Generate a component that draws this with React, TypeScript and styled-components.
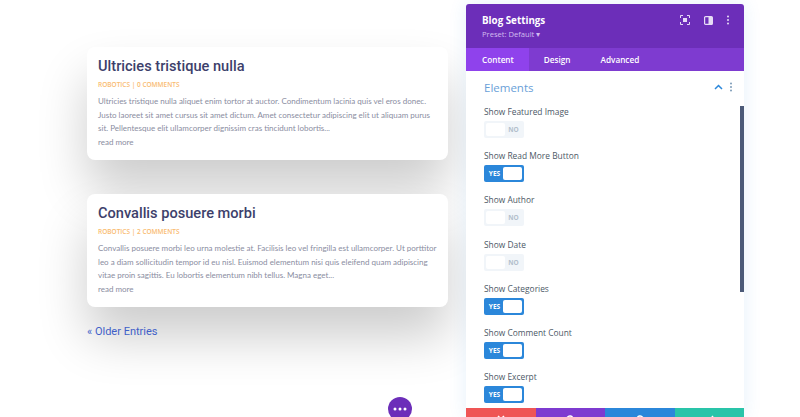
import styled, { createGlobalStyle } from "styled-components";

const GlobalStyle = createGlobalStyle`
  html, body {
    margin: 0;
    height: 417px;
    overflow: hidden;
    background: #fff;
    font-family: "Open Sans", sans-serif;
  }
`;

const posts = [
  {
    title: "Ultricies tristique nulla",
    meta: "ROBOTICS | 0 COMMENTS",
    lines: [
      "Ultricies tristique nulla aliquet enim tortor at auctor. Condimentum lacinia quis vel eros donec.",
      "Justo laoreet sit amet cursus sit amet dictum. Amet consectetur adipiscing elit ut aliquam purus",
      "sit. Pellentesque elit ullamcorper dignissim cras tincidunt lobortis...",
    ],
  },
  {
    title: "Convallis posuere morbi",
    meta: "ROBOTICS | 2 COMMENTS",
    lines: [
      "Convallis posuere morbi leo urna molestie at. Facilisis leo vel fringilla est ullamcorper. Ut porttitor",
      "leo a diam sollicitudin tempor id eu nisl. Euismod elementum nisi quis eleifend quam adipiscing",
      "vitae proin sagittis. Eu lobortis elementum nibh tellus. Magna eget...",
    ],
  },
];

const toggles = [
  { label: "Show Featured Image", on: false },
  { label: "Show Read More Button", on: true },
  { label: "Show Author", on: false },
  { label: "Show Date", on: false },
  { label: "Show Categories", on: true },
  { label: "Show Comment Count", on: true },
  { label: "Show Excerpt", on: true },
];

const Dots = ({ color }: { color: string }) => (
  <svg width="4" height="10" viewBox="0 0 4 10">
    <circle cx="2" cy="1.5" r="1" fill={color} />
    <circle cx="2" cy="5" r="1" fill={color} />
    <circle cx="2" cy="8.5" r="1" fill={color} />
  </svg>
);

const App = () => {
  return (
    <Page>
      <GlobalStyle />
      <Blog>
        {posts.map((post) => (
          <Card key={post.title}>
            <Title>{post.title}</Title>
            <Meta>{post.meta}</Meta>
            <Excerpt>
              {post.lines.map((line) => (
                <div key={line}>{line}</div>
              ))}
              <div>read more</div>
            </Excerpt>
          </Card>
        ))}
        <OlderLink>« Older Entries</OlderLink>
      </Blog>
      <Panel>
        <Header>
          <div>
            <PanelTitle>Blog Settings</PanelTitle>
            <Preset>Preset: Default ▾</Preset>
          </div>
          <HeaderIcons>
            <svg width="10" height="10" viewBox="0 0 10 10" fill="none" stroke="#e6dcf5" strokeWidth="1">
              <path d="M.5 3V.5H3M7 .5h2.5V3M9.5 7v2.5H7M3 9.5H.5V7" />
              <rect x="3" y="3" width="4" height="4" fill="#e6dcf5" stroke="none" />
            </svg>
            <svg width="9" height="9" viewBox="0 0 9 9">
              <rect x="0.6" y="0.6" width="7.8" height="7.8" rx="1" fill="none" stroke="#e6dcf5" strokeWidth="1.2" />
              <rect x="4.5" y="1" width="3.5" height="7" fill="#e6dcf5" />
            </svg>
            <Dots color="#e6dcf5" />
          </HeaderIcons>
        </Header>
        <Tabs>
          <Tab $active>Content</Tab>
          <Tab>Design</Tab>
          <Tab>Advanced</Tab>
        </Tabs>
        <Body>
          <SectionHead>
            <SectionTitle>Elements</SectionTitle>
            <SectionIcons>
              <svg width="9" height="6" viewBox="0 0 9 6" fill="none" stroke="#2b87da" strokeWidth="1.5">
                <path d="M1 5l3.5-3.5L8 5" />
              </svg>
              <Dots color="#7d9bb8" />
            </SectionIcons>
          </SectionHead>
          {toggles.map((item) => (
            <Field key={item.label}>
              <FieldLabel>{item.label}</FieldLabel>
              <Toggle $on={item.on}>
                {item.on ? (
                  <>
                    <ToggleText $on>YES</ToggleText>
                    <Knob />
                  </>
                ) : (
                  <>
                    <Knob />
                    <ToggleText>NO</ToggleText>
                  </>
                )}
              </Toggle>
            </Field>
          ))}
        </Body>
        <Scrollbar />
        <Footer>
          <FooterButton $color="#ef5555">
            <svg width="10" height="10" viewBox="0 0 10 10" stroke="#fff" strokeWidth="1.5">
              <path d="M2 2l6 6M8 2l-6 6" />
            </svg>
          </FooterButton>
          <FooterButton $color="#7e3bd0">
            <svg width="10" height="10" viewBox="0 0 10 10" fill="none" stroke="#fff" strokeWidth="1.4">
              <path d="M2 5a3 3 0 1 0 1-2.3L1.5 4" />
            </svg>
          </FooterButton>
          <FooterButton $color="#2b87da">
            <svg width="10" height="10" viewBox="0 0 10 10" fill="none" stroke="#fff" strokeWidth="1.4">
              <path d="M8 5a3 3 0 1 1-1-2.3L8.5 4" />
            </svg>
          </FooterButton>
          <FooterButton $color="#29c4a9">
            <svg width="10" height="10" viewBox="0 0 10 10" fill="none" stroke="#fff" strokeWidth="1.5">
              <path d="M1.5 5.5l2.5 2.5 5-6" />
            </svg>
          </FooterButton>
        </Footer>
      </Panel>
      <Fab>
        <svg width="14" height="4" viewBox="0 0 14 4" fill="#fff">
          <circle cx="2" cy="2" r="1.5" />
          <circle cx="7" cy="2" r="1.5" />
          <circle cx="12" cy="2" r="1.5" />
        </svg>
      </Fab>
    </Page>
  );
};

export default App;

const Page = styled.div`
  position: relative;
  display: flex;
  align-items: flex-start;
  height: 417px;
  overflow: hidden;
  padding-left: 87px;
`;

const Blog = styled.div`
  width: 361px;
  padding-top: 47px;
  display: flex;
  flex-direction: column;
`;

const Card = styled.div`
  box-sizing: border-box;
  height: 113px;
  margin-bottom: 34px;
  padding: 10px 11px;
  border-radius: 8px;
  background: #fff;
  box-shadow: 0 30px 50px rgba(0, 0, 0, 0.2);
`;

const Title = styled.div`
  font-family: Roboto, sans-serif;
  font-size: 14.6px;
  font-weight: 500;
  line-height: 18px;
  color: #3d3f6b;
`;

const Meta = styled.div`
  margin-top: 5px;
  font-size: 6.5px;
  font-weight: 600;
  line-height: 9px;
  color: #f9bb70;
`;

const Excerpt = styled.div`
  margin-top: 6px;
  font-family: Lato, sans-serif;
  font-size: 8px;
  line-height: 13.7px;
  white-space: nowrap;
  color: #8a8d9f;
`;

const OlderLink = styled.div`
  margin-top: -16px;
  font-family: Roboto, sans-serif;
  font-size: 11px;
  line-height: 14px;
  color: #3f5fc8;
`;

const Panel = styled.div`
  position: relative;
  flex: none;
  box-sizing: border-box;
  display: flex;
  flex-direction: column;
  width: 278px;
  height: 413px;
  margin: 4px 0 0 18px;
  overflow: hidden;
  background: #fff;
  border-radius: 3px 3px 0 0;
  box-shadow: 0 0 18px rgba(43, 135, 218, 0.12);
`;

const Header = styled.div`
  flex: none;
  box-sizing: border-box;
  height: 44px;
  padding: 10px 16px 0 16px;
  display: flex;
  justify-content: space-between;
  background: #6c2eb9;
`;

const PanelTitle = styled.div`
  font-size: 9.8px;
  font-weight: 700;
  line-height: 13px;
  color: #fff;
`;

const Preset = styled.div`
  margin-top: 2px;
  font-size: 7.6px;
  line-height: 11px;
  color: #d3bdf0;
`;

const HeaderIcons = styled.div`
  display: flex;
  align-items: center;
  gap: 13.5px;
  height: 10px;
  margin: 1px -2px 0 0;
`;

const Tabs = styled.div`
  flex: none;
  display: flex;
  height: 23px;
  background: #7e3bd0;
`;

const Tab = styled.div<{ $active?: boolean }>`
  padding: ${(p) => (p.$active ? "0 15px 0 16px" : "0 15px")};
  display: flex;
  align-items: center;
  font-size: 8.2px;
  font-weight: 600;
  color: #fff;
  background: ${(p) => (p.$active ? "#8f42ec" : "transparent")};
`;

const Body = styled.div`
  flex: 1;
  min-height: 0;
  padding: 8px 18px 0 18px;
`;

const SectionHead = styled.div`
  display: flex;
  align-items: center;
  justify-content: space-between;
  height: 16px;
  margin-bottom: 10px;
`;

const SectionTitle = styled.div`
  font-size: 11.5px;
  color: #6a9fd8;
`;

const SectionIcons = styled.div`
  display: flex;
  align-items: center;
  gap: 6px;
  margin-right: -7px;
`;

const Field = styled.div`
  height: 44.2px;
`;

const FieldLabel = styled.div`
  font-size: 8.4px;
  line-height: 13px;
  color: #4c5866;
`;

const Toggle = styled.div<{ $on?: boolean }>`
  box-sizing: border-box;
  margin-top: 3px;
  width: 40px;
  height: 17px;
  padding: 2px;
  display: flex;
  align-items: center;
  justify-content: space-between;
  border-radius: 2px;
  background: ${(p) => (p.$on ? "#2b87da" : "#f1f5f9")};
`;

const Knob = styled.div`
  width: 19px;
  height: 13px;
  border-radius: 2px;
  background: #fff;
`;

const ToggleText = styled.div<{ $on?: boolean }>`
  flex: 1;
  text-align: center;
  font-size: 6.5px;
  font-weight: 700;
  color: ${(p) => (p.$on ? "#fff" : "#b3bfcc")};
`;

const Scrollbar = styled.div`
  position: absolute;
  top: 102px;
  right: 0;
  width: 4px;
  height: 186px;
  background: #4c5a78;
`;

const Footer = styled.div`
  flex: none;
  display: grid;
  grid-template-columns: repeat(4, 1fr);
  height: 9px;
`;

const FooterButton = styled.div<{ $color: string }>`
  display: flex;
  justify-content: center;
  padding-top: 6px;
  background: ${(p) => p.$color};
`;

const Fab = styled.div`
  position: absolute;
  left: 388px;
  top: 397px;
  width: 24px;
  height: 24px;
  border-radius: 50%;
  display: flex;
  align-items: center;
  justify-content: center;
  background: #6c2eb9;
`;
